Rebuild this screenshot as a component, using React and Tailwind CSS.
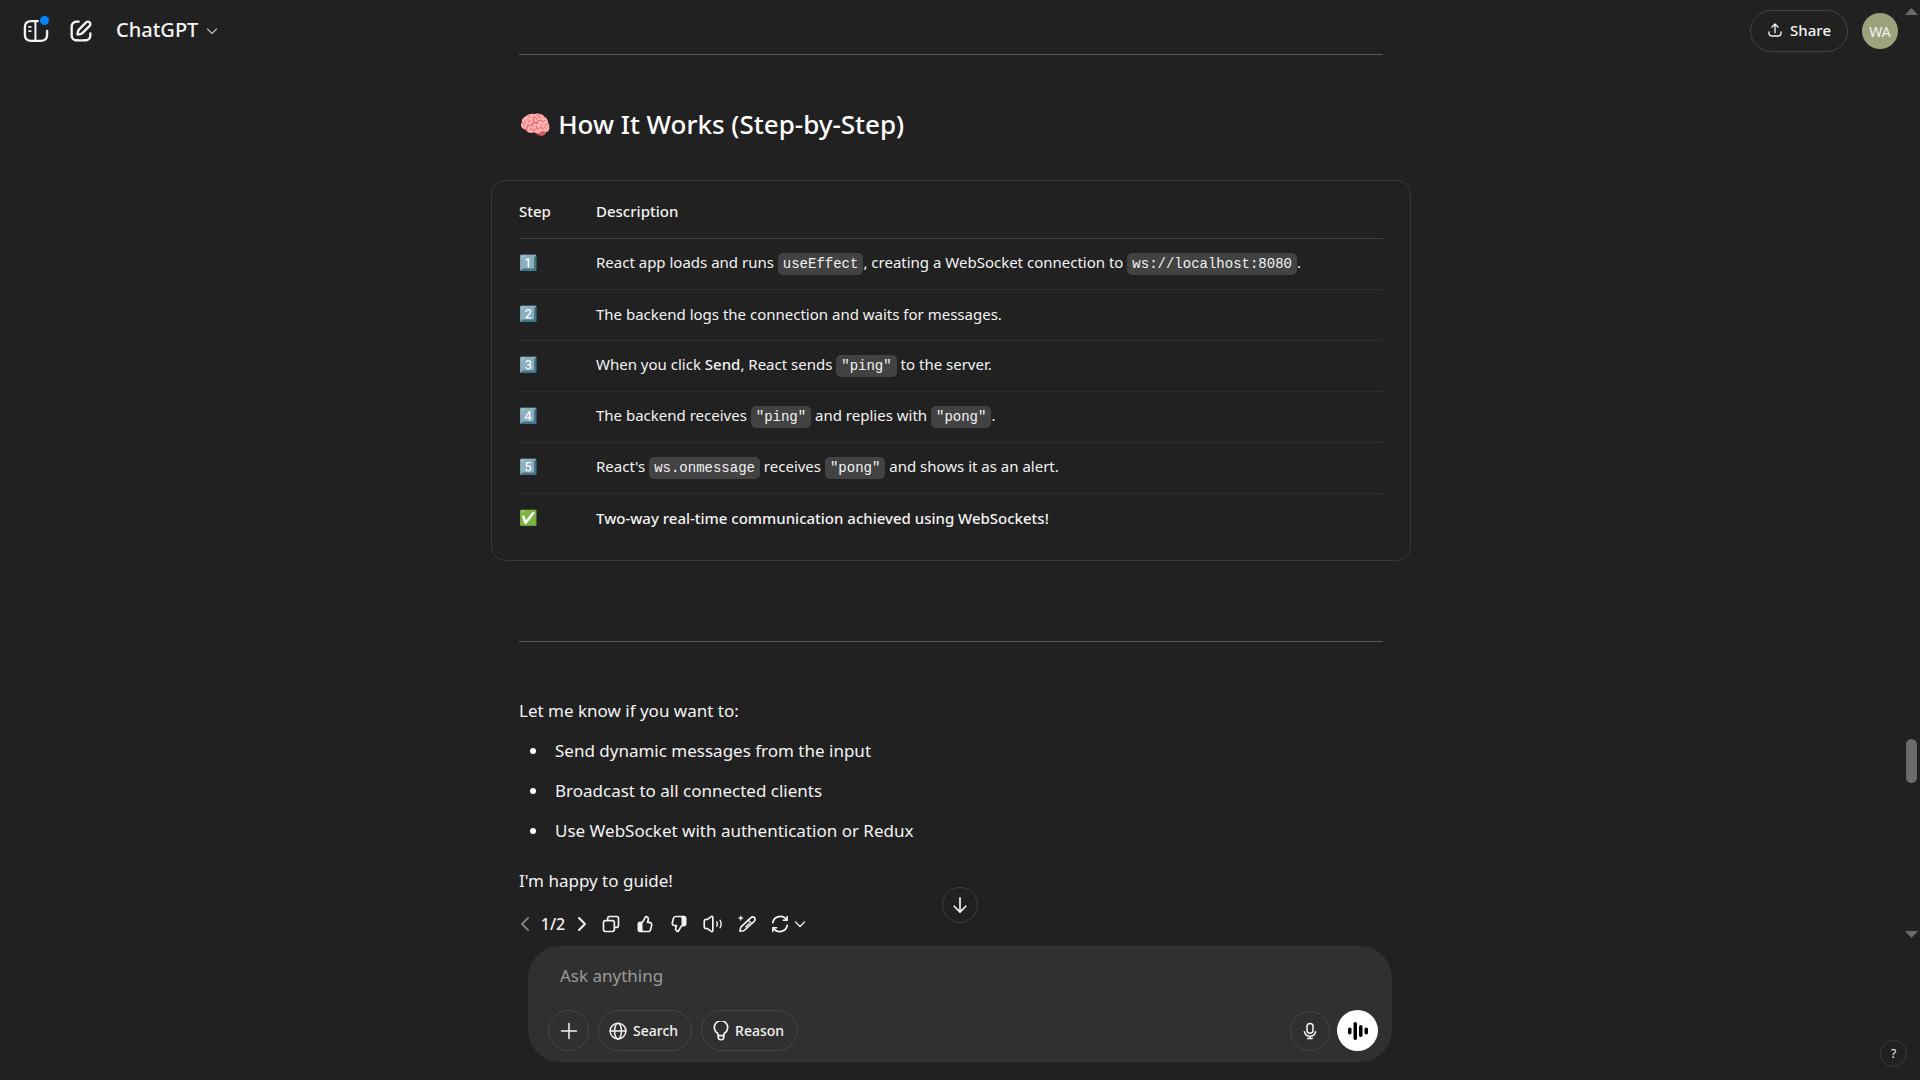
import React from "react";

const stroke = {
  fill: "none",
  stroke: "currentColor",
  strokeWidth: 2,
  strokeLinecap: "round",
  strokeLinejoin: "round",
};

function Icon({ className = "size-5", viewBox = "0 0 24 24", children, ...rest }) {
  return (
    <svg className={className} viewBox={viewBox} fill="currentColor" aria-hidden="true" {...rest}>
      {children}
    </svg>
  );
}

const SidebarIcon = () => (
  <Icon className="size-7" {...stroke}>
    <path d="M13.500 3.500H8C5 3.500 2.500 5 2.500 8.500v7c0 3.500 2.500 5 5.500 5h8c3 0 5.500-1.500 5.500-5V12" />
    <path strokeWidth="1.700" d="M11.500 3.500v17" />
    <path strokeWidth="1.500" d="M6 8.500h1.500M6 12h1.500" />
  </Icon>
);

const ComposeIcon = () => (
  <Icon className="size-7">
    <path d="M15.6729 3.91287C16.8918 2.69392 18.8682 2.69392 20.0871 3.91287C21.3061 5.13182 21.3061 7.10813 20.0871 8.32708L14.1499 14.2643C13.3849 15.0293 12.3925 15.5255 11.3215 15.6785L9.14142 15.9899C8.82983 16.0344 8.51546 15.9297 8.29289 15.7071C8.07033 15.4845 7.96554 15.1701 8.01005 14.8586L8.32149 12.6785C8.47449 11.6075 8.97072 10.615 9.7357 9.85006L15.6729 3.91287ZM18.6729 5.32708C18.235 4.88918 17.525 4.88918 17.0871 5.32708L11.1499 11.2643C10.6909 11.7233 10.3932 12.3187 10.3014 12.9613L10.1785 13.8215L11.0386 13.6986C11.6812 13.6068 12.2767 13.3091 12.7357 12.8501L18.6729 6.91287C19.1108 6.47497 19.1108 5.76499 18.6729 5.32708ZM11 3.99929C11.0004 4.55157 10.5531 4.99963 10.0008 5.00007C9.00227 5.00084 8.29769 5.00827 7.74651 5.06064C7.20685 5.11191 6.88488 5.20117 6.63803 5.32695C6.07354 5.61457 5.6146 6.07351 5.32698 6.63799C5.19279 6.90135 5.10062 7.24904 5.05118 7.8542C5.00078 8.47105 5 9.26336 5 10.4V13.6C5 14.7366 5.00078 15.5289 5.05118 16.1457C5.10062 16.7509 5.19279 17.0986 5.32698 17.3619C5.6146 17.9264 6.07354 18.3854 6.63803 18.673C6.90138 18.8072 7.24907 18.8993 7.85424 18.9488C8.47108 18.9992 9.26339 19 10.4 19H13.6C14.7366 19 15.5289 18.9992 16.1458 18.9488C16.7509 18.8993 17.0986 18.8072 17.362 18.673C17.9265 18.3854 18.3854 17.9264 18.673 17.3619C18.7988 17.1151 18.8881 16.7931 18.9393 16.2535C18.9917 15.7023 18.9991 14.9977 18.9999 13.9992C19.0003 13.4469 19.4484 12.9995 20.0007 13C20.553 13.0004 21.0003 13.4485 20.9999 14.0007C20.9991 14.9789 20.9932 15.7808 20.9304 16.4426C20.8664 17.116 20.7385 17.7136 20.455 18.2699C19.9757 19.2107 19.2108 19.9756 18.27 20.455C17.6777 20.7568 17.0375 20.8826 16.3086 20.9421C15.6008 21 14.7266 21 13.6428 21H10.3572C9.27339 21 8.39925 21 7.69138 20.9421C6.96253 20.8826 6.32234 20.7568 5.73005 20.455C4.78924 19.9756 4.02433 19.2107 3.54497 18.2699C3.24318 17.6776 3.11737 17.0374 3.05782 16.3086C2.99998 15.6007 2.99999 14.7266 3 13.6428V10.3572C2.99999 9.27337 2.99998 8.39922 3.05782 7.69134C3.11737 6.96249 3.24318 6.3223 3.54497 5.73001C4.02433 4.7892 4.78924 4.0243 5.73005 3.54493C6.28633 3.26149 6.88399 3.13358 7.55735 3.06961C8.21919 3.00673 9.02103 3.00083 9.99922 3.00007C10.5515 2.99964 10.9996 3.447 11 3.99929Z" />
  </Icon>
);

const ChevronDown = ({ className }) => (
  <Icon className={className} {...stroke} strokeWidth="2.400">
    <path d="M3 8l9 9 9-9" />
  </Icon>
);

const ShareIcon = () => (
  <Icon className="size-4" {...stroke}>
    <path d="M12 16V3.500M7.500 7.500L12 3l4.500 4.500M3 15v2c0 2.500 1.500 4 4 4h10c2.500 0 4-1.500 4-4v-2" />
  </Icon>
);

const CopyIcon = () => (
  <Icon>
    <path d="M7 5C7 3.34315 8.34315 2 10 2H19C20.6569 2 22 3.34315 22 5V14C22 15.6569 20.6569 17 19 17H17V19C17 20.6569 15.6569 22 14 22H5C3.34315 22 2 20.6569 2 19V10C2 8.34315 3.34315 7 5 7H7V5ZM9 7H14C15.6569 7 17 8.34315 17 10V15H19C19.5523 15 20 14.5523 20 14V5C20 4.44772 19.5523 4 19 4H10C9.44772 4 9 4.44772 9 5V7ZM5 9C4.44772 9 4 9.44772 4 10V19C4 19.5523 4.44772 20 5 20H14C14.5523 20 15 19.5523 15 19V10C15 9.44772 14.5523 9 14 9H5Z" />
  </Icon>
);

const ThumbUpIcon = () => (
  <Icon>
    <path d="M12.1318 2.50389C12.3321 2.15338 12.7235 1.95768 13.124 2.00775L13.5778 2.06447C16.0449 2.37286 17.636 4.83353 16.9048 7.20993L16.354 8.99999H17.0722C19.7097 8.99999 21.6253 11.5079 20.9313 14.0525L19.5677 19.0525C19.0931 20.7927 17.5124 22 15.7086 22H6C4.34315 22 3 20.6568 3 19V12C3 10.3431 4.34315 8.99999 6 8.99999H8C8.25952 8.99999 8.49914 8.86094 8.6279 8.63561L12.1318 2.50389ZM10 20H15.7086C16.6105 20 17.4008 19.3964 17.6381 18.5262L19.0018 13.5262C19.3488 12.2539 18.391 11 17.0722 11H15C14.6827 11 14.3841 10.8494 14.1956 10.5941C14.0071 10.3388 13.9509 10.0092 14.0442 9.70591L14.9932 6.62175C15.3384 5.49984 14.6484 4.34036 13.5319 4.08468L10.3644 9.62789C10.0522 10.1742 9.56691 10.5859 9 10.8098V19C9 19.5523 9.44772 20 10 20ZM7 11V19C7 19.3506 7.06015 19.6872 7.17071 20H6C5.44772 20 5 19.5523 5 19V12C5 11.4477 5.44772 11 6 11H7Z" />
  </Icon>
);

const ThumbDownIcon = () => (
  <Icon>
    <path d="M11.8727 21.4961C11.6725 21.8466 11.2811 22.0423 10.8805 21.9922L10.4267 21.9355C7.95958 21.6271 6.36855 19.1665 7.09975 16.7901L7.65054 15H6.93226C4.29476 15 2.37923 12.4921 3.0732 9.94753L4.43684 4.94753C4.91145 3.20728 6.49209 2 8.29589 2H18.0045C19.6614 2 21.0045 3.34315 21.0045 5V12C21.0045 13.6569 19.6614 15 18.0045 15H16.0045C15.745 15 15.5054 15.1391 15.3766 15.3644L11.8727 21.4961ZM14.0045 4H8.29589C7.39399 4 6.60367 4.60364 6.36637 5.47376L5.00273 10.4738C4.65574 11.746 5.61351 13 6.93226 13H9.00451C9.32185 13 9.62036 13.1506 9.8089 13.4059C9.99743 13.6612 10.0536 13.9908 9.96028 14.2941L9.01131 17.3782C8.6661 18.5002 9.35608 19.6596 10.4726 19.9153L13.6401 14.3721C13.9523 13.8258 14.4376 13.4141 15.0045 13.1902V5C15.0045 4.44772 14.5568 4 14.0045 4ZM17.0045 13V5C17.0045 4.64937 16.9444 4.31278 16.8338 4H18.0045C18.5568 4 19.0045 4.44772 19.0045 5V12C19.0045 12.5523 18.5568 13 18.0045 13H17.0045Z" />
  </Icon>
);

const SpeakerIcon = () => (
  <Icon {...stroke}>
    <path d="M9.800 3.200c.9-.6 2 0 2 1.100v15.400c0 1.100-1.100 1.700-2 1.100L5.500 17.500H4c-1.500 0-2.500-1-2.500-2.500V9c0-1.500 1-2.500 2.500-2.500h1.500z" />
    <path strokeWidth="1.700" d="M16.500 9.500c.8 1.500.8 3.500 0 5M20.500 7.500c1.600 2.800 1.600 6.200 0 9" />
  </Icon>
);

const PencilSparkIcon = () => (
  <Icon>
    <path d="M4.500 1.200l1 2.700 2.700 1-2.700 1-1 2.700-1-2.700-2.700-1 2.700-1z" />
    <path {...stroke} d="M16.400 4.600c1.400-1.400 3.400-1.400 4.500-.3s1.100 3.100-.3 4.500L9.300 19.200c-.7.700-1.600 1.100-2.600 1.200l-3.200.3.500-3.100c.1-.9.500-1.700 1.200-2.400z" />
    <path {...stroke} strokeWidth="1.600" d="M13.500 7.500l4 4M10.500 15.500l4-4" />
  </Icon>
);

const RefreshIcon = () => (
  <Icon {...stroke}>
    <path d="M20.500 3v4.500H16M3.500 21v-4.500H8" />
    <path d="M20 7.500A9 9 0 0 0 3.300 10.500M4 16.500a9 9 0 0 0 16.700-3" />
  </Icon>
);

const GlobeIcon = () => (
  <Icon className="size-[18px]" {...stroke}>
    <circle cx="12" cy="12" r="10.500" />
    <ellipse cx="12" cy="12" rx="4.600" ry="10.500" />
    <path d="M1.500 12h21" />
  </Icon>
);

const BulbIcon = () => (
  <Icon className="h-5 w-4" viewBox="0 0 18 24" {...stroke}>
    <path d="M5.500 17.500v-1.600c0-.6-.4-1.100-.9-1.500a8 8 0 1 1 8.800 0c-.5.400-.9.900-.9 1.500v1.600z" />
    <path d="M5.500 18c0 3 1.500 4.500 3.500 4.500s3.500-1.500 3.500-4.500" />
  </Icon>
);

const MicIcon = () => (
  <Icon className="size-[18px]" {...stroke}>
    <rect x="8" y="2" width="8" height="13" rx="4" />
    <path d="M4.500 13a7.700 7.700 0 0 0 15 0M12 19v3M9 22h6" />
  </Icon>
);

const VoiceIcon = () => (
  <Icon className="size-6">
    <rect x="2" y="8.500" width="3.500" height="7" rx="1.700" />
    <rect x="7.500" y="3" width="3.500" height="18" rx="1.700" />
    <rect x="13" y="6" width="3.500" height="12" rx="1.700" />
    <rect x="18.500" y="8.500" width="3.500" height="7" rx="1.700" />
  </Icon>
);

function Code({ children }) {
  return (
    <code className="rounded-[5px] bg-[#424242] px-[5px] py-[3px] font-['Liberation_Mono',monospace] text-[14px] font-medium">
      {children}
    </code>
  );
}

const steps = [
  ["1️⃣", <>React app loads and runs <Code>useEffect</Code>, creating a WebSocket connection to <Code>ws://localhost:8080</Code>.</>],
  ["2️⃣", "The backend logs the connection and waits for messages."],
  ["3️⃣", <>When you click <strong className="font-medium">Send</strong>, React sends <Code>"ping"</Code> to the server.</>],
  ["4️⃣", <>The backend receives <Code>"ping"</Code> and replies with <Code>"pong"</Code>.</>],
  ["5️⃣", <>React's <Code>ws.onmessage</Code> receives <Code>"pong"</Code> and shows it as an alert.</>],
  ["✅", <strong className="font-medium">Two-way real-time communication achieved using WebSockets!</strong>],
];

const suggestions = [
  "Send dynamic messages from the input",
  "Broadcast to all connected clients",
  "Use WebSocket with authentication or Redux",
];

function Header() {
  return (
    <header className="flex h-[52px] items-end justify-between pr-1 pl-[22px]">
      <div className="flex h-[42px] items-center gap-[17px]">
        <button aria-label="Open sidebar" className="relative">
          <SidebarIcon />
          <span className="absolute -top-px right-px size-[9px] rounded-full bg-[#0285ff]" />
        </button>
        <button aria-label="New chat"><ComposeIcon /></button>
        <button className="ml-1 flex items-center gap-2 pb-[2px] text-[20px] leading-7 font-medium">
          ChatGPT
          <ChevronDown className="mt-[2px] size-3 text-[#b4b4b4]" />
        </button>
      </div>
      <div className="flex items-center gap-[14px]">
        <button className="flex h-[42px] items-center gap-[7px] rounded-full border border-[#424242] px-4 pb-[2px] text-[15px] font-medium">
          <ShareIcon />
          Share
        </button>
        <button aria-label="Account" className="size-9 rounded-full bg-[#9ca37c] text-[14px]">WA</button>
      </div>
    </header>
  );
}

function Answer() {
  return (
    <article className="mx-auto w-full max-w-[864px] text-[17px] leading-8">
      <hr className="mt-[2px] border-[#5a5a5a]" />
      <h2 className="mt-[53px] text-[26px] leading-8 font-medium text-white">🧠 How It Works (Step-by-Step)</h2>
      <div className="-mx-7 mt-[40px] rounded-[14px] border border-[#383838] px-[27px] pb-4">
        <table className="w-full text-left text-[15px] leading-6">
          <thead>
            <tr className="h-[57px] border-b border-[#424242]">
              <th className="w-[77px] pt-1 font-medium">Step</th>
              <th className="pt-1 font-medium">Description</th>
            </tr>
          </thead>
          <tbody>
            {steps.map(([mark, text]) => (
              <tr key={mark} className="h-[51px] border-b border-[#2e2e2e] last:border-0">
                <td className="pb-1">{mark}</td>
                <td className="pb-[2px]">{text}</td>
              </tr>
            ))}
          </tbody>
        </table>
      </div>
      <hr className="mt-20 border-[#5a5a5a]" />
      <p className="mt-[53px]">Let me know if you want to:</p>
      <ul className="mt-2 flex list-disc flex-col gap-2 pl-[30px] marker:text-white">
        {suggestions.map((item) => <li key={item} className="pl-[6px]">{item}</li>)}
      </ul>
      <p className="mt-[18px]">I'm happy to guide!</p>
    </article>
  );
}

function Action({ label, children }) {
  return <button aria-label={label} className="flex size-[34px] items-center justify-center">{children}</button>;
}

function Actions() {
  return (
    <div className="mx-auto mt-[10px] flex w-full max-w-[864px] items-center">
      <div className="flex items-center text-[16px] font-medium">
        <button aria-label="Previous response" className="w-3 text-[#7d7d7d]">
          <Icon className="h-[18px] w-3" viewBox="0 0 12 18" {...stroke}><path d="M9 3L3 9l6 6" /></Icon>
        </button>
        <span className="w-11 text-center">1/2</span>
        <button aria-label="Next response" className="mr-[6px] ml-px w-3">
          <Icon className="h-[18px] w-3" viewBox="0 0 12 18" {...stroke}><path d="M3 3l6 6-6 6" /></Icon>
        </button>
      </div>
      <Action label="Copy"><CopyIcon /></Action>
      <Action label="Good response"><ThumbUpIcon /></Action>
      <Action label="Bad response"><ThumbDownIcon /></Action>
      <Action label="Read aloud"><SpeakerIcon /></Action>
      <Action label="Edit in canvas"><PencilSparkIcon /></Action>
      <button aria-label="Try again" className="flex h-[34px] items-center gap-1 pl-[6px]">
        <RefreshIcon />
        <ChevronDown className="size-3" />
      </button>
    </div>
  );
}

function Scrollbar() {
  return (
    <div className="flex w-[18px] flex-col items-center py-2 text-[#6b6b6b]" aria-hidden="true">
      <Icon className="h-[7px] w-[13px]" viewBox="0 0 13 7"><path d="M6.500 0L13 7H0z" /></Icon>
      <div className="grow-[723]" />
      <div className="h-11 w-[11px] rounded-full bg-[#6b6b6b]" />
      <div className="grow-[148]" />
      <Icon className="h-[7px] w-[13px]" viewBox="0 0 13 7"><path d="M0 0h13L6.500 7z" /></Icon>
    </div>
  );
}

function Composer() {
  return (
    <form className="relative mx-auto mb-[18px] w-full max-w-[864px] rounded-[32px] border border-[#343434] bg-[#303030] px-[19px] pb-[10px]">
      <button
        type="button"
        aria-label="Scroll to bottom"
        className="absolute -top-[60px] left-1/2 flex size-9 -translate-x-1/2 items-center justify-center rounded-full border border-[#3c3c3c] bg-[#212121]"
      >
        <Icon {...stroke}><path d="M12 3.500v17M5 13.500l7 7 7-7" /></Icon>
      </button>
      <textarea
        aria-label="Message"
        placeholder="Ask anything"
        rows="1"
        className="mt-[13px] block h-8 w-full resize-none bg-transparent px-3 text-[17px] leading-8 outline-none placeholder:text-[#9b9b9b]"
      />
      <div className="mt-[18px] flex items-center gap-[9px] text-[14px] font-medium">
        <button type="button" aria-label="Add files" className="flex size-[41px] items-center justify-center rounded-full border border-[#454545]">
          <Icon className="size-[18px]" {...stroke}><path d="M12 2v20M2 12h20" /></Icon>
        </button>
        <button type="button" className="flex h-[41px] items-center gap-[6px] rounded-full border border-[#454545] pr-[13px] pl-[10px]">
          <GlobeIcon />
          Search
        </button>
        <button type="button" className="flex h-[41px] items-center gap-[6px] rounded-full border border-[#454545] pr-[13px] pl-[11px]">
          <BulbIcon />
          Reason
        </button>
        <button type="button" aria-label="Dictate" className="ml-auto flex size-10 items-center justify-center rounded-full border border-[#454545]">
          <MicIcon />
        </button>
        <button type="button" aria-label="Voice mode" className="mr-[-6px] ml-[-2px] flex size-[41px] items-center justify-center rounded-full bg-white text-black">
          <VoiceIcon />
        </button>
      </div>
    </form>
  );
}

export default function App() {
  return (
    <div className="relative flex min-h-screen flex-col bg-[#212121] font-['Noto_Sans','Noto_Color_Emoji',sans-serif] text-[#f3f3f3]">
      <div className="flex grow">
        <main className="flex min-w-0 grow flex-col">
          <Header />
          <Answer />
          <Actions />
        </main>
        <Scrollbar />
      </div>
      <Composer />
      <button aria-label="Help" className="absolute right-[13px] bottom-[13px] size-[27px] rounded-full border border-[#3c3c3c] text-[12px]">?</button>
    </div>
  );
}
